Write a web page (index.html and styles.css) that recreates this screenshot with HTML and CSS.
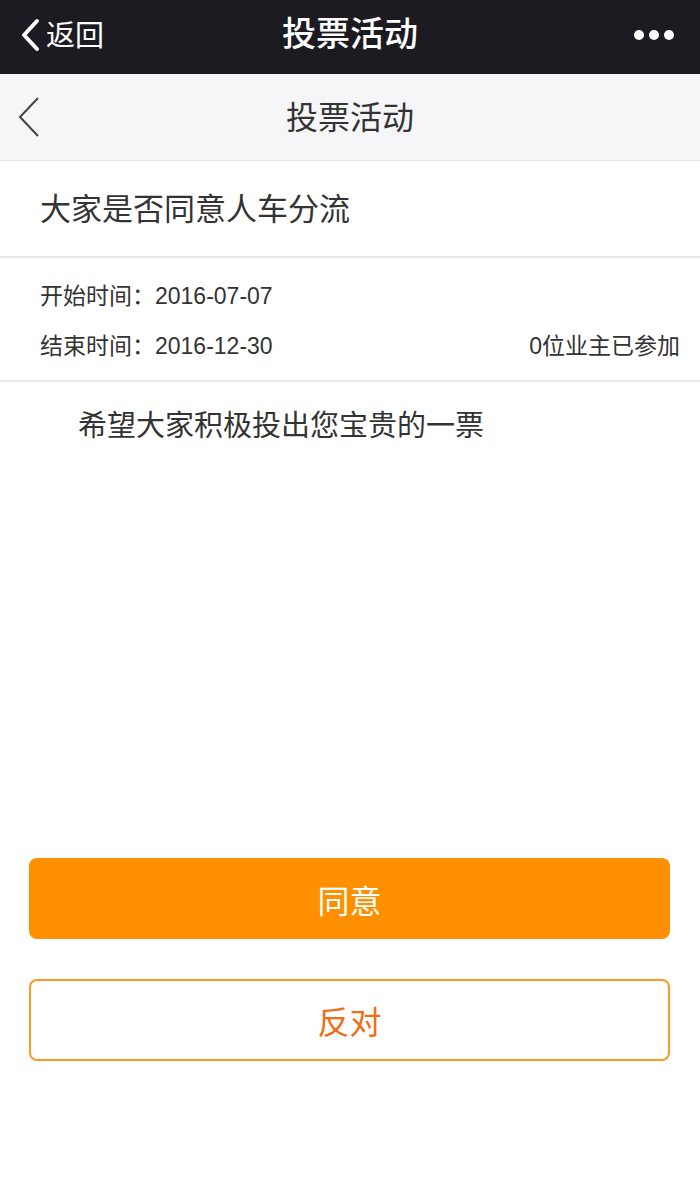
FILE: index.html
```html
<!DOCTYPE html>
<html lang="zh-CN">
<head>
    <meta charset="UTF-8">
    <meta name="viewport" content="width=device-width, initial-scale=1.0">
    <title>投票活动</title>
    <link rel="stylesheet" href="styles.css">
</head>
<body>
    <!-- wechat top bar -->
    <div id="topBar">
        <a class="back" href="#">
            <svg width="24" height="34" viewBox="0 0 24 34"><path d="M19 3 L6 17 L19 31" fill="none" stroke="#fff" stroke-width="4" stroke-linecap="round" stroke-linejoin="round"/></svg>
            <span>返回</span>
        </a>
        <h1>投票活动</h1>
        <div class="more">
            <i></i><i></i><i></i>
        </div>
    </div>

    <!-- page header -->
    <div id="header">
        <a class="back" href="#">
            <svg width="26" height="42" viewBox="0 0 26 42"><path d="M22 2 L4 21 L22 40" fill="none" stroke="#444" stroke-width="2"/></svg>
        </a>
        <h2>投票活动</h2>
    </div>

    <div class="voteTitle">大家是否同意人车分流</div>

    <div class="voteInfo">
        <div class="row">
            <span>开始时间：2016-07-07</span>
        </div>
        <div class="row">
            <span>结束时间：2016-12-30</span>
            <span>0位业主已参加</span>
        </div>
    </div>

    <div class="voteDesc">希望大家积极投出您宝贵的一票</div>

    <div class="actions">
        <button class="btn agree">同意</button>
        <button class="btn oppose">反对</button>
    </div>
</body>
</html>
```

FILE: styles.css
```css
/* Reset default margin and padding on all elements */
* {
    margin: 0;
    padding: 0;
    box-sizing: border-box;
}

body {
    font-family: "Liberation Sans", "Noto Sans CJK SC", sans-serif;
    background-color: #fff;
    color: #333;
    width: 700px;
    min-height: 1200px;
}

/* Dark wechat bar */
#topBar {
    height: 74px;
    background-color: #1c1b21;
    color: #fff;
    display: flex;
    align-items: center;
    justify-content: space-between;
    padding: 0 26px 4px 18px;
    position: relative;
}

#topBar .back {
    display: flex;
    align-items: center;
    gap: 4px;
    color: #fff;
    text-decoration: none;
    font-size: 29px;
}

#topBar .back span {
    margin-top: -4px;
}

#topBar h1 {
    position: absolute;
    left: 0;
    right: 0;
    top: 10px;
    text-align: center;
    font-size: 34px;
    line-height: 48px;
    font-weight: 500;
    pointer-events: none;
}

#topBar .more {
    display: flex;
    gap: 5px;
}

#topBar .more i {
    width: 10px;
    height: 10px;
    border-radius: 50%;
    background-color: #fff;
}

/* Grey page header */
#header {
    height: 87px;
    background-color: #f6f6f8;
    border-bottom: 1px solid #e6e6e8;
    display: flex;
    align-items: center;
    padding-left: 16px;
    position: relative;
}

#header .back {
    display: flex;
}

#header h2 {
    position: absolute;
    left: 0;
    right: 0;
    top: 23px;
    line-height: 42px;
    text-align: center;
    font-size: 32px;
    font-weight: normal;
    color: #333;
}

/* Vote content */
.voteTitle {
    height: 97px;
    padding: 0 40px 4px;
    display: flex;
    align-items: center;
    font-size: 31px;
    border-bottom: 2px solid #e8e8e8;
}

.voteInfo {
    padding: 11px 20px 11px 40px;
    border-bottom: 2px solid #e8e8e8;
    font-size: 23px;
}

.voteInfo .row {
    height: 50px;
    display: flex;
    align-items: center;
    justify-content: space-between;
}

.voteDesc {
    height: 476px;
    padding: 24px 40px 0;
    text-indent: 38px;
    font-size: 29px;
    line-height: 40px;
}

/* Buttons */
.actions {
    display: flex;
    flex-direction: column;
    gap: 40px;
    padding: 0 30px 0 29px;
}

.btn {
    height: 81px;
    border-radius: 8px;
    font-family: inherit;
    font-size: 32px;
    cursor: pointer;
}

.agree {
    background-color: #fe9000;
    border: none;
    color: #fff;
}

.oppose {
    height: 82px;
    background-color: #fff;
    border: 2px solid #fb9a1e;
    color: #f06d14;
}
```
